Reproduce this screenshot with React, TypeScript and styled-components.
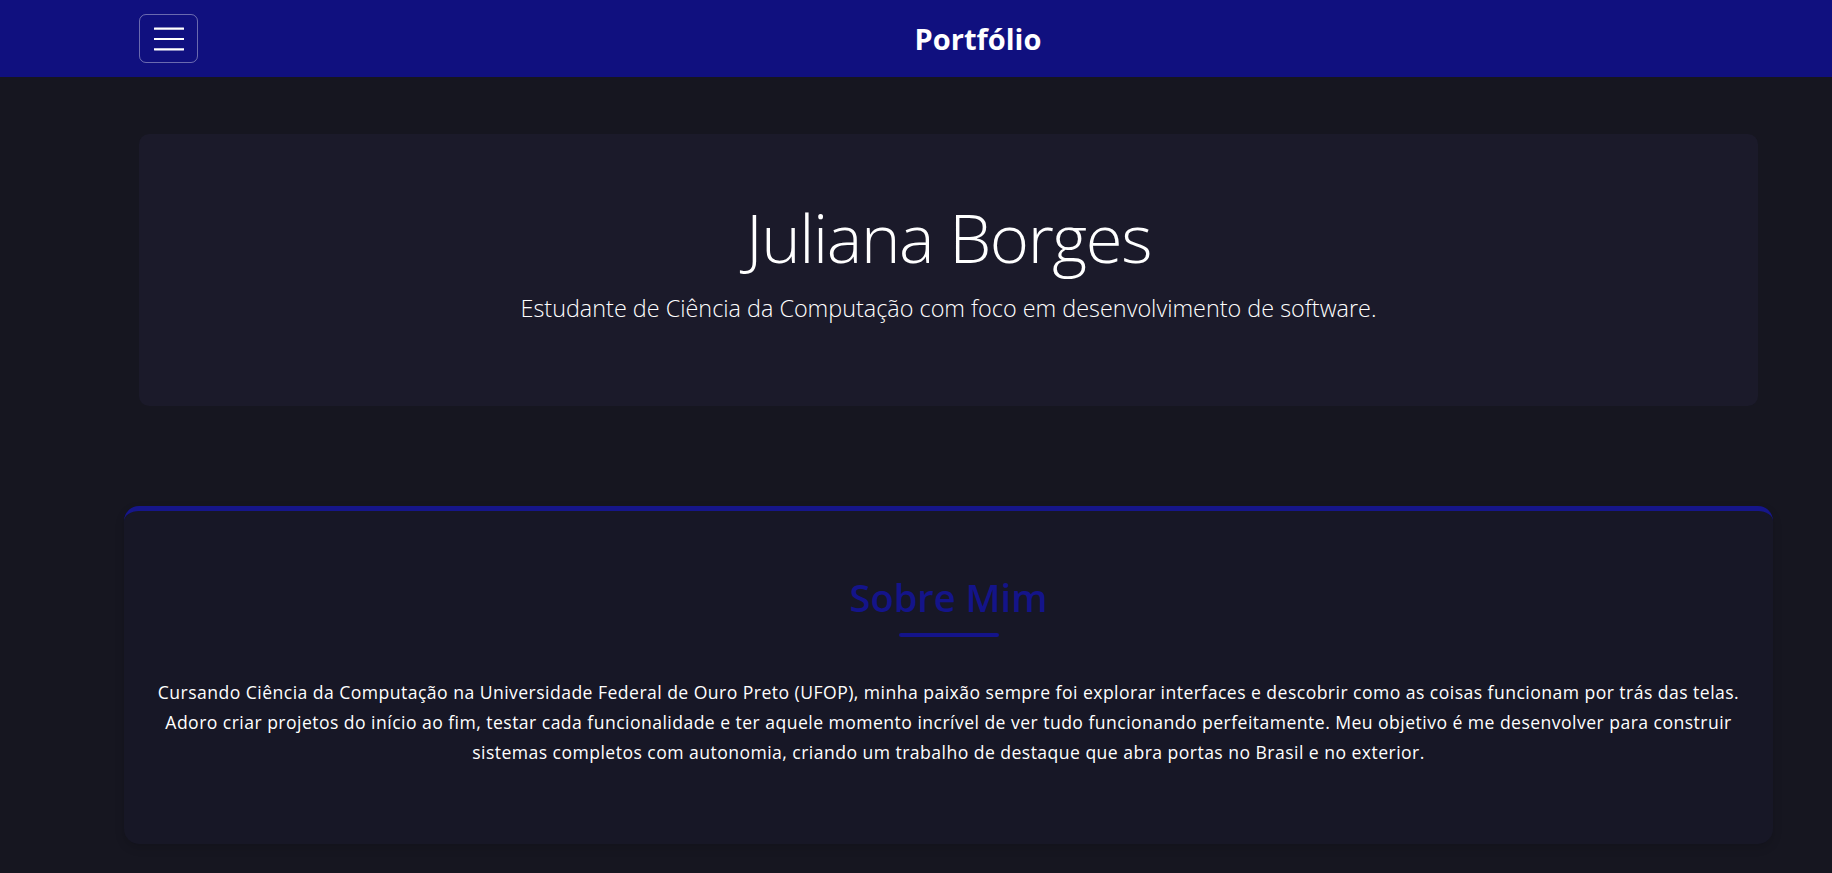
import React from "react";
import styled, { createGlobalStyle } from "styled-components";

const GlobalStyle = createGlobalStyle`
  html, body {
    margin: 0;
    padding: 0;
    background: #161620;
  }
  body {
    font-family: "Open Sans", "Noto Sans", "Liberation Sans", sans-serif;
    color: #ffffff;
  }
  * { box-sizing: border-box; }
`;

const Navbar = styled.nav`
  background: #10107f;
  height: 77px;
`;

const NavInner = styled.div`
  height: 100%;
  display: flex;
  align-items: center;
  padding: 0 74px 0 139px;
`;

const Toggler = styled.button`
  width: 59px;
  height: 49px;
  display: flex;
  align-items: center;
  justify-content: center;
  background: transparent;
  border: 1px solid rgba(255, 255, 255, 0.38);
  border-radius: 7px;
  padding: 0;
  cursor: pointer;
`;

const Brand = styled.div`
  flex: 1;
  text-align: center;
  font-size: 29px;
  font-weight: 700;
  color: #ffffff;
`;

const Main = styled.main`
  padding: 57px 74px 30px 139px;
`;

const Hero = styled.section`
  background: #1b1a2a;
  border-radius: 10px;
  height: 272px;
  display: flex;
  flex-direction: column;
  align-items: center;
  padding-top: 61px;
`;

const HeroTitle = styled.h1`
  margin: 0;
  font-size: 67px;
  font-weight: 300;
  line-height: 84px;
  letter-spacing: -1.4px;
  color: #ffffff;
`;

const HeroLead = styled.p`
  margin: 13px 0 0;
  font-size: 23.4px;
  font-weight: 300;
  line-height: 32px;
  color: #ffffff;
`;

const AboutCard = styled.section`
  margin: 100px -15px 0;
  background: #171726;
  border-top: 5px solid #16168a;
  border-radius: 15px;
  height: 338px;
  padding: 62px 32px 0;
  display: flex;
  flex-direction: column;
  align-items: center;
  box-shadow: 0 4px 10px rgba(0, 0, 0, 0.15);
`;

const AboutTitle = styled.h2`
  margin: 0;
  font-size: 38px;
  font-weight: 600;
  line-height: 48px;
  color: #14148a;
`;

const TitleBar = styled.div`
  width: 100px;
  height: 4px;
  border-radius: 2px;
  background: #14148a;
  margin-top: 12px;
`;

const AboutText = styled.p`
  margin: 40px 0 0;
  font-size: 17.6px;
  line-height: 30px;
  letter-spacing: 0.45px;
  text-align: center;
  white-space: nowrap;
  color: #ffffff;
`;

const Hamburger = () => (
  <svg width="30" height="30" viewBox="0 0 30 30" aria-hidden="true">
    <path
      d="M0.5 4.7h29M0.5 15h29M0.5 25.3h29"
      stroke="#ffffff"
      strokeWidth="2.2"
      strokeLinecap="round"
    />
  </svg>
);

export default function App() {
  return (
    <>
      <GlobalStyle />
      <Navbar>
        <NavInner>
          <Toggler aria-label="Menu">
            <Hamburger />
          </Toggler>
          <Brand>Portfólio</Brand>
        </NavInner>
      </Navbar>
      <Main>
        <Hero>
          <HeroTitle>Juliana Borges</HeroTitle>
          <HeroLead>
            Estudante de Ciência da Computação com foco em desenvolvimento de software.
          </HeroLead>
        </Hero>
        <AboutCard>
          <AboutTitle>Sobre Mim</AboutTitle>
          <TitleBar />
          <AboutText>
            Cursando Ciência da Computação na Universidade Federal de Ouro Preto (UFOP), minha paixão sempre foi explorar interfaces e descobrir como as coisas funcionam por trás das telas.
            <br />
            Adoro criar projetos do início ao fim, testar cada funcionalidade e ter aquele momento incrível de ver tudo funcionando perfeitamente. Meu objetivo é me desenvolver para construir
            <br />
            sistemas completos com autonomia, criando um trabalho de destaque que abra portas no Brasil e no exterior.
          </AboutText>
        </AboutCard>
      </Main>
    </>
  );
}
